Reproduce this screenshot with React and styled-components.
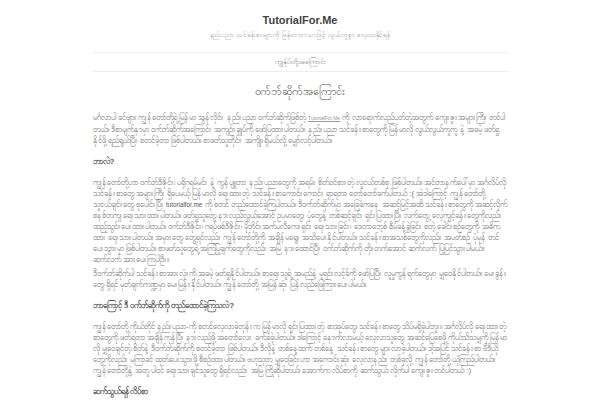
import React from 'react'
import styled, { createGlobalStyle } from 'styled-components'

const GlobalStyle = createGlobalStyle`
body {
  margin: 0;
  background: #fff;
  color: #777;
  font-family: "Liberation Sans", Arial, "Noto Sans", sans-serif;
}
`

const Page = styled.div`
  width: 415px;
  margin: 0 auto;
`

const Header = styled.header`
  padding-top: 13px;
  padding-bottom: 12px;
  text-align: center;
`

const SiteTitle = styled.h1`
  margin: 0;
  font-size: 11px;
  line-height: 14px;
  font-weight: bold;
  color: #444;
`

const Tagline = styled.p`
  margin: 3px 0 0;
  font-size: 6.5px;
  line-height: 10px;
  color: #999;
`

const Nav = styled.nav`
  border-top: 1px solid #eee;
  border-bottom: 1px solid #eee;
  padding: 4px 0;
  text-align: center;
  font-size: 7.5px;
  line-height: 10px;
  color: #888;
`

const Main = styled.main`
  padding-top: 11px;
`

const PageTitle = styled.h2`
  margin: 0 0 13px;
  text-align: center;
  font-size: 11px;
  line-height: 16px;
  font-weight: normal;
  color: #555;
`

const Section = styled.h3`
  margin: 9px 0 8px;
  font-size: 8px;
  line-height: 14px;
  font-weight: bold;
  color: #555;
`

const Text = styled.p`
  margin: 0 0 3px;
  font-size: 8px;
  line-height: 11px;
  color: #777;
`

const SiteLink = styled.a`
  font-size: 5px;
  color: #999;
  text-decoration: underline;
`

const Latin = styled.span`
  font-size: 6.3px;
  color: #555;
`

export default function App() {
  return (
    <>
      <GlobalStyle />
      <Page>
        <Header>
          <SiteTitle>TutorialFor.Me</SiteTitle>
          <Tagline>နည်းပညာ သင်ခန်းစာများကို မြန်မာဘာသာဖြင့် လွယ်ကူစွာ လေ့လာနိုင်ရန်</Tagline>
        </Header>
        <Nav>ကျွန်ုပ်တို့အကြောင်း</Nav>
        <Main>
          <PageTitle>ဝက်ဘ်ဆိုက်အကြောင်း</PageTitle>
          <Text>
            မင်္ဂလာပါ ခင်ဗျာ။ ကျွန်တော်တို့ရဲ့ မြန်မာ အွန်လိုင်း နည်းပညာ ဝက်ဘ်ဆိုက်ဖြစ်တဲ့ <SiteLink href="#">TutorialFor.Me</SiteLink> ကို
            လာရောက်လည်ပတ်တဲ့အတွက် ကျေးဇူးအများကြီး တင်ပါတယ်။ ဒီစာမျက်နှာမှာ ဝက်ဘ်ဆိုက်အကြောင်း
            အကျဉ်းချုပ်ကို ဖော်ပြထားပါတယ်။ နည်းပညာ သင်ခန်းစာတွေကို မြန်မာလို လွယ်လွယ်ကူကူ နဲ့ အခမဲ့
            ဖတ်ရှုနိုင်ဖို့ ရည်ရွယ်ပြီး စတင်ခဲ့တာ ဖြစ်ပါတယ်။ စာဖတ်သူတိုင်း အကျိုးရှိမယ်လို့ မျှော်လင့်ပါတယ်။
          </Text>
          <Section>ဘာလဲ?</Section>
          <Text>
            ကျွန်တော်တို့ဟာ ဝက်ဘ်ဒီဇိုင်း၊ ပရိုဂရမ်မင်း နဲ့ ကွန်ပျူတာ နည်းပညာတွေကို အရမ်း စိတ်ဝင်စားတဲ့
            လူငယ်တစ်စု ဖြစ်ပါတယ်။ အင်တာနက်ပေါ်မှာ အင်္ဂလိပ်လို သင်ခန်းစာတွေ အများကြီး ရှိပေမယ့် မြန်မာလို
            ရေးထားတဲ့ သင်ခန်းစာကောင်းကောင်း ရှာရတာ တော်တော်ခက်ပါတယ် :( အဲဒါကြောင့် ကျွန်တော်တို့
            သူငယ်ချင်းတွေ စုပေါင်းပြီး <Latin>tutorialfor.me</Latin> ကို စတင် တည်ထောင်ခဲ့ကြပါတယ်။
            ဒီဝက်ဘ်ဆိုက်မှာ အခြေခံကနေ အဆင့်မြင့်အထိ သင်ခန်းစာတွေကို အဆင့်လိုက် စနစ်တကျ ရေးသားထားပါတယ်။
            ဖတ်ရှုသူတွေ နားလည်လွယ်အောင် ဥပမာတွေ၊ ပုံတွေနဲ့ တစ်ဆင့်ချင်း ရှင်းပြထားပြီး လက်တွေ့
            လေ့ကျင့်ခန်းတွေကိုလည်း ထည့်သွင်းပေးထားပါတယ်။ ဝက်ဘ်ဒီဇိုင်း၊ ဂရပ်ဖစ်ဒီဇိုင်း၊ မိုဘိုင်းအက်ပလီကေးရှင်း
            ရေးသားခြင်း၊ ဒေတာဘေ့စ် စီမံခန့်ခွဲခြင်း စတဲ့ ခေါင်းစဉ်တွေကို အဓိကထား ရေးသားပါတယ်။ အမှားတွေ
            တွေ့ရင်လည်း ကျွန်တော်တို့ကို အချိန်မရွေး အသိပေးနိုင်ပါတယ်။ သင်ခန်းစာအသစ်တွေကိုလည်း အပတ်စဉ်
            ပုံမှန် တင်ပေးသွားမှာ ဖြစ်ပါတယ်။ စာဖတ်သူတွေရဲ့ အကြံပြုချက်တွေကိုလည်း အမြဲ နားထောင်ပြီး
            ဝက်ဘ်ဆိုက်ကို တိုးတက်အောင် ဆက်လက် ပြုပြင်သွားပါမယ်။ ဆက်လက် အားပေးကြပါဦး။
          </Text>
          <Text>
            ဒီဝက်ဘ်ဆိုက်ပါ သင်ခန်းစာအားလုံးကို အခမဲ့ ဖတ်ရှုနိုင်ပါတယ်။ စာရေးသူရဲ့ အမည်နဲ့ မူရင်းလင့်ခ်ကို
            ဖော်ပြပြီး လူမှုကွန်ရက်တွေမှာ မျှဝေနိုင်ပါတယ်။ မေးခွန်းတွေ ရှိရင် မှတ်ချက်ကဏ္ဍမှာ
            မေးမြန်းနိုင်ပါတယ်။ ကျွန်တော်တို့ အမြန်ဆုံး ပြန်လည်ဖြေကြားပေးပါမယ်။
          </Text>
          <Section>ဘာကြောင့် ဒီ ဝက်ဘ်ဆိုက်ကို တည်ထောင်ခဲ့ကြသလဲ?</Section>
          <Text>
            ကျွန်တော်တို့ ကိုယ်တိုင် နည်းပညာ-ကို စတင်လေ့လာခဲ့တုန်းက မြန်မာလို ရှင်းပြထားတဲ့ စာအုပ်တွေ၊
            သင်ခန်းစာတွေ သိပ်မရှိခဲ့ပါဘူး။ အင်္ဂလိပ်လို ရေးထားတဲ့ စာတွေကို ဖတ်ရတာ အချိန်ကုန်ပြီး နားလည်ဖို့
            အတော်လေး ခက်ခဲခဲ့ပါတယ်။ ဒါကြောင့် နောက်လာမယ့် လေ့လာသူတွေ အဆင်ပြေစေဖို့ ကိုယ်သိသမျှကို
            မြန်မာလို မျှဝေချင်တဲ့ စိတ်နဲ့ ဒီဝက်ဘ်ဆိုက်ကို စတင်ခဲ့တာ ဖြစ်ပါတယ်။ ဒီလိုနဲ့ တစ်နေ့ထက်
            တစ်နေ့ သင်ခန်းစာတွေ များလာခဲ့ပါတယ်။ ဒါ့အပြင် သင်ခန်းစာ ဗီဒီယိုတွေကိုလည်း မကြာခင်
            ထုတ်ပေးသွားဖို့ စီစဉ်ထားပါတယ်။ ဗဟုသုတ မျှဝေခြင်းဟာ အကောင်းဆုံး လေ့လာနည်း
            တစ်ခုလို့ ကျွန်တော်တို့ ယုံကြည်ပါတယ်။ ကျွန်တော်တို့နဲ့ အတူ ပါဝင် ရေးသားချင်သူတွေ ရှိရင်လည်း
            အမြဲ ကြိုဆိုပါတယ်၊ အောက်က လိပ်စာကို ဆက်သွယ် လိုက်ပါ ကျေးဇူးတင်ပါတယ် :)
          </Text>
          <Section>ဆက်သွယ်ရန်လိပ်စာ</Section>
        </Main>
      </Page>
    </>
  )
}
